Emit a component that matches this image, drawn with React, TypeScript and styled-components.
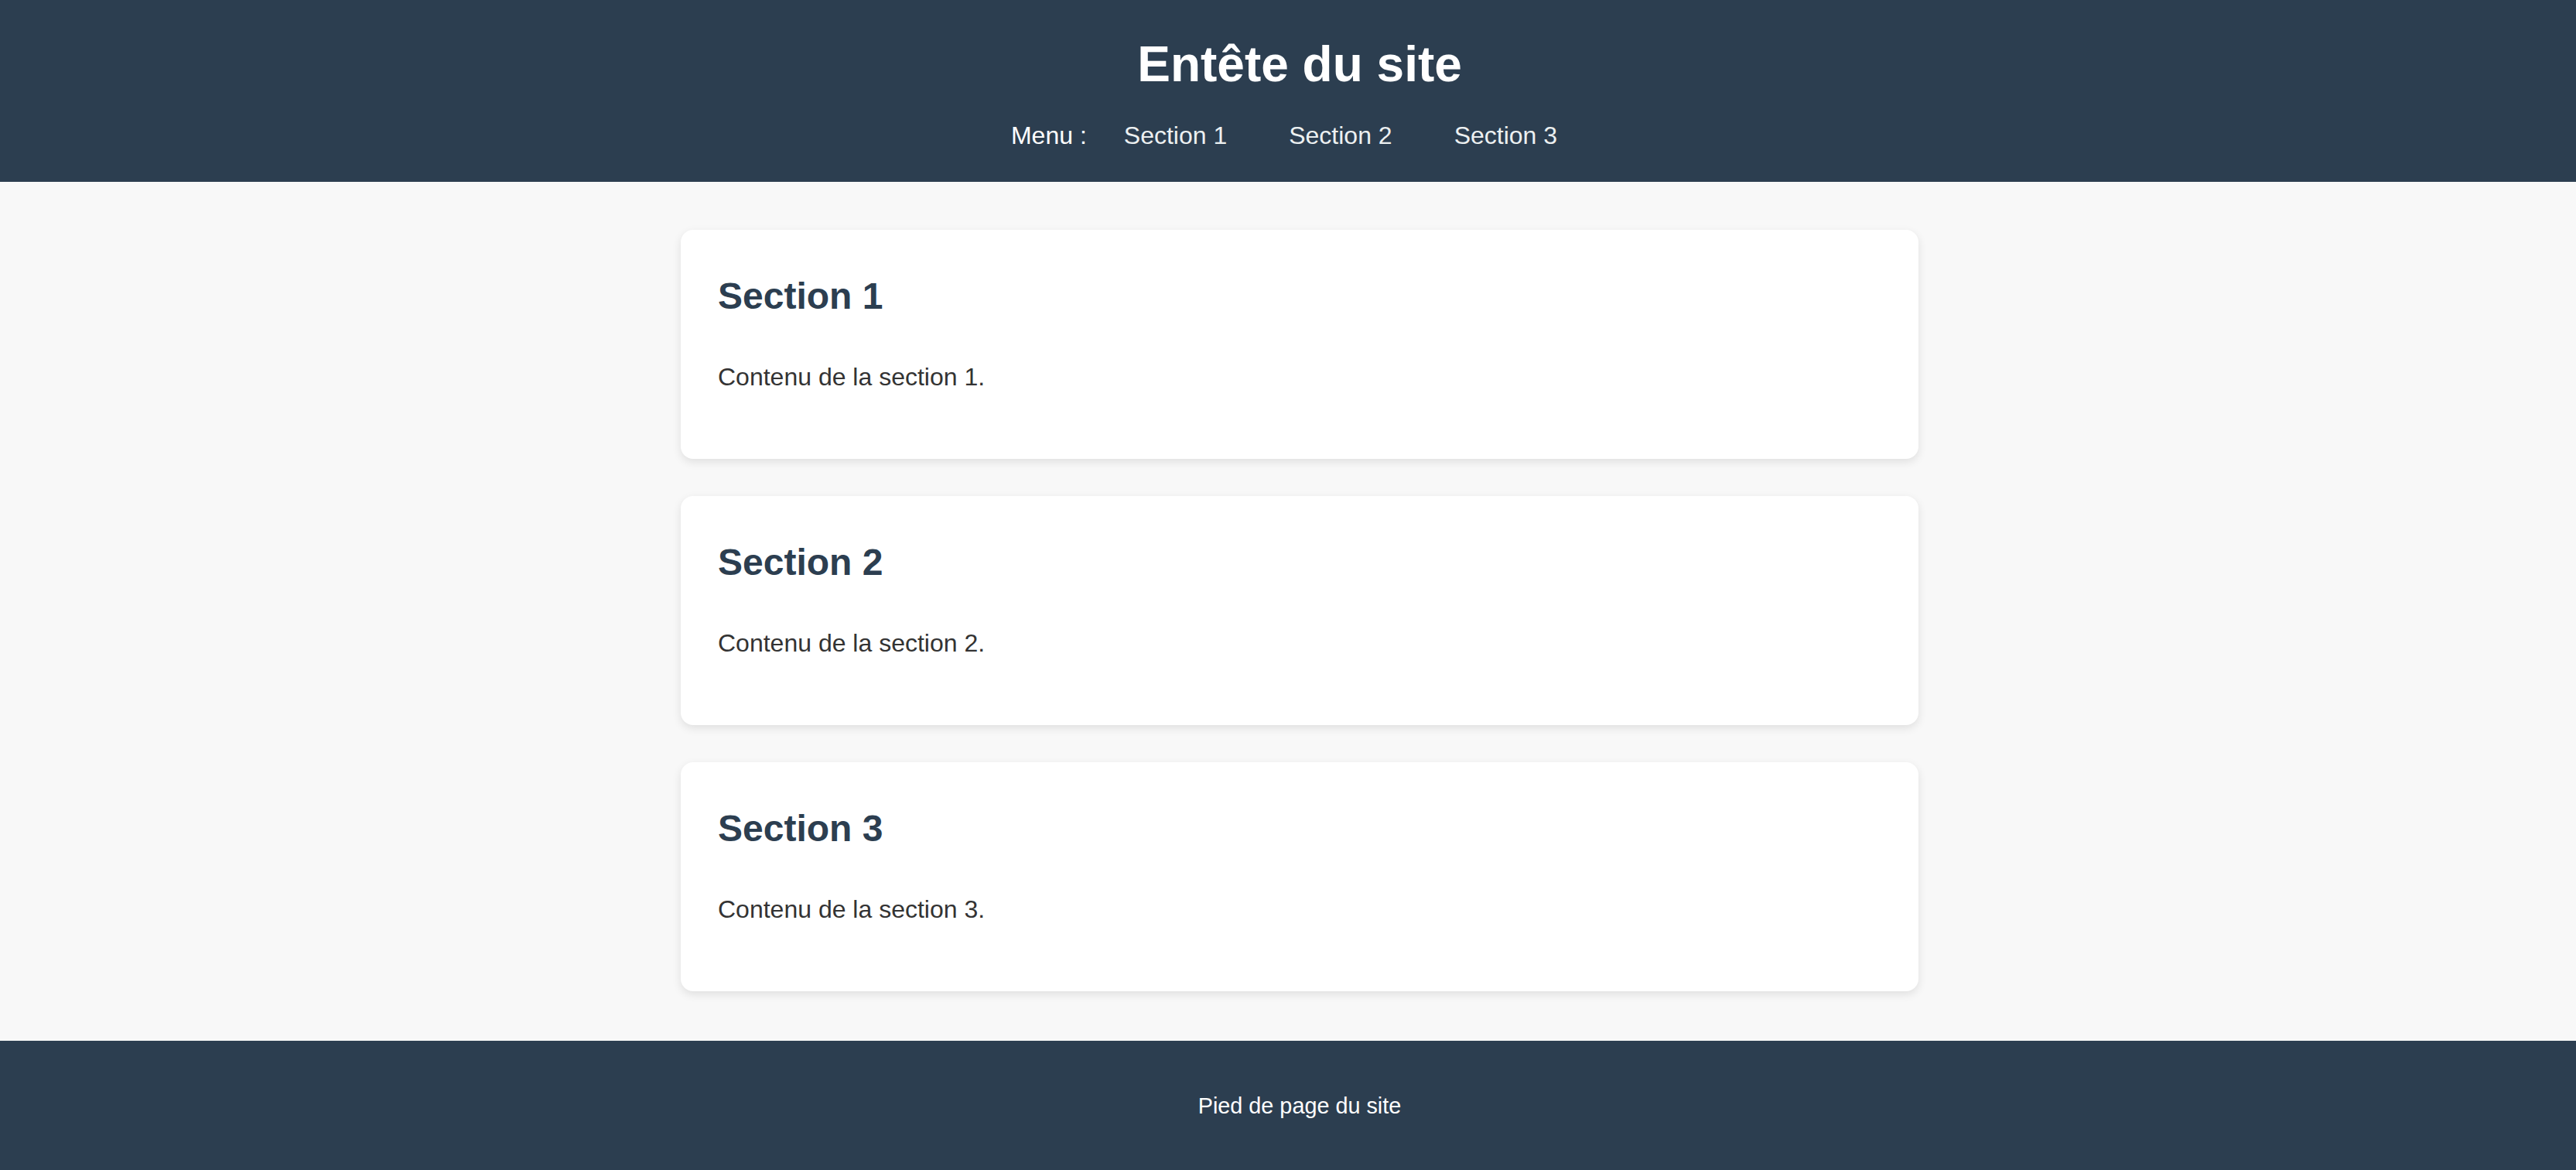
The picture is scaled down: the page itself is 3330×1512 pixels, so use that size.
import React from 'react';
import styled, { createGlobalStyle } from 'styled-components';

const GlobalStyle = createGlobalStyle`
  html, body {
    margin: 0;
    padding: 0;
    overflow-x: hidden;
  }
  body {
    font-family: "Liberation Sans", Arial, sans-serif;
    font-size: 32px;
    line-height: 1.6;
    color: #333;
    background: #f8f8f8;
  }
  * {
    box-sizing: border-box;
  }
`;

const Page = styled.div`
  width: 3360px;
  min-height: 1512px;
  display: flex;
  flex-direction: column;
`;

const Header = styled.header`
  background: #2c3e50;
  color: #fff;
  padding: 45px 0 34px;
  text-align: center;
`;

const SiteTitle = styled.h1`
  margin: 0 0 28px;
  font-size: 64px;
  line-height: 1.2;
  font-weight: bold;
`;

const Nav = styled.nav`
  display: flex;
  justify-content: center;
  align-items: center;
`;

const MenuLabel = styled.span`
  margin-right: 8px;
`;

const NavLink = styled.a`
  margin: 0 40px;
  color: #ecf0f1;
  text-decoration: none;
`;

const Main = styled.main`
  flex: 1;
  padding: 62px 0 64px;
  display: flex;
  flex-direction: column;
  align-items: center;
  gap: 48px;
`;

const Card = styled.section`
  width: 1600px;
  background: #fff;
  border-radius: 16px;
  padding: 48px;
  box-shadow: 0 4px 12px rgba(0, 0, 0, 0.1);
`;

const CardTitle = styled.h2`
  margin: 0 0 40px;
  font-size: 48px;
  line-height: 1.6;
  color: #2c3e50;
`;

const CardText = styled.p`
  margin: 0 0 32px;
`;

const Footer = styled.footer`
  background: #2c3e50;
  color: #fff;
  text-align: center;
  padding: 61px 0 64px;
  font-size: 28.8px;
`;

const sections = [1, 2, 3];

export default function App() {
  return (
    <>
      <GlobalStyle />
      <Page>
        <Header>
          <SiteTitle>Entête du site</SiteTitle>
          <Nav>
            <MenuLabel>Menu :</MenuLabel>
            {sections.map((n) => (
              <NavLink key={n} href={`#section${n}`}>
                Section {n}
              </NavLink>
            ))}
          </Nav>
        </Header>
        <Main>
          {sections.map((n) => (
            <Card key={n} id={`section${n}`}>
              <CardTitle>Section {n}</CardTitle>
              <CardText>Contenu de la section {n}.</CardText>
            </Card>
          ))}
        </Main>
        <Footer>Pied de page du site</Footer>
      </Page>
    </>
  );
}
